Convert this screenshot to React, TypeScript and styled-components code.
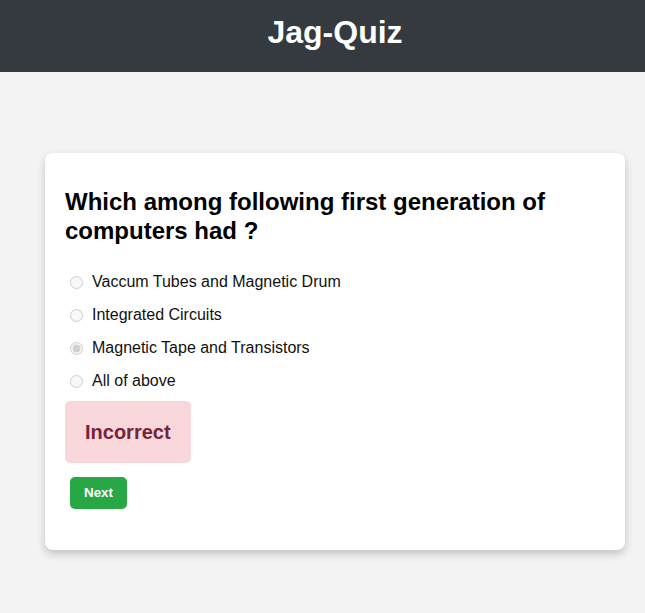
import React from "react";
import styled, { createGlobalStyle } from "styled-components";

const GlobalStyle = createGlobalStyle`
  html, body {
    margin: 0;
    padding: 0;
    background: #f3f3f3;
    overflow: hidden;
    font-family: "Liberation Sans", Arial, sans-serif;
  }
  * { box-sizing: border-box; }
`;

const Page = styled.div`
  width: 670px;
  min-height: 613px;
  background: #f3f3f3;
`;

const Header = styled.header`
  background: #343a40;
  padding: 13px 0 21px;
  text-align: center;
`;

const Title = styled.h1`
  margin: 0;
  color: #ffffff;
  font-size: 32px;
  line-height: 38px;
  font-weight: 700;
`;

const Main = styled.main`
  padding-top: 81px;
  display: flex;
  justify-content: center;
`;

const Card = styled.section`
  width: 580px;
  background: #ffffff;
  border-radius: 8px;
  box-shadow: 0 4px 8px rgba(0, 0, 0, 0.2);
  padding: 20px;
`;

const Question = styled.h2`
  margin: 15px 0 0;
  font-size: 24px;
  line-height: 28.8px;
  font-weight: 700;
  color: #000;
`;

const Options = styled.div`
  margin-top: 20px;
  display: flex;
  flex-direction: column;
`;

const Option = styled.label`
  height: 33px;
  display: flex;
  align-items: center;
  font-size: 16px;
  color: #111;
`;

const Radio = styled.input`
  width: 13px;
  height: 13px;
  margin: 0 9px 0 5px;
`;

const Feedback = styled.div<{ $correct: boolean }>`
  display: inline-block;
  margin-top: 3px;
  padding: 20px;
  border-radius: 5px;
  font-size: 20px;
  line-height: 22px;
  font-weight: 700;
  background: ${(p) => (p.$correct ? "#d4edda" : "#f8d7da")};
  color: ${(p) => (p.$correct ? "#155724" : "#742539")};
`;

const Actions = styled.div`
  margin: 14px 0 21px 5px;
`;

const NextButton = styled.button`
  background: #28a745;
  color: #ffffff;
  border: none;
  border-radius: 5px;
  padding: 8px 14px;
  font-family: "Liberation Sans", Arial, sans-serif;
  font-size: 13.333px;
  line-height: 16px;
  font-weight: 700;
  cursor: pointer;
`;

const options = [
  "Vaccum Tubes and Magnetic Drum",
  "Integrated Circuits",
  "Magnetic Tape and Transistors",
  "All of above",
];

export default function App() {
  const selected = 2;
  return (
    <Page>
      <GlobalStyle />
      <Header>
        <Title>Jag-Quiz</Title>
      </Header>
      <Main>
        <Card>
          <Question>Which among following first generation of computers had ?</Question>
          <Options>
            {options.map((o, i) => (
              <Option key={o}>
                <Radio type="radio" name="q" disabled checked={i === selected} readOnly />
                {o}
              </Option>
            ))}
          </Options>
          <Feedback $correct={false}>Incorrect</Feedback>
          <Actions>
            <NextButton>Next</NextButton>
          </Actions>
        </Card>
      </Main>
    </Page>
  );
}
